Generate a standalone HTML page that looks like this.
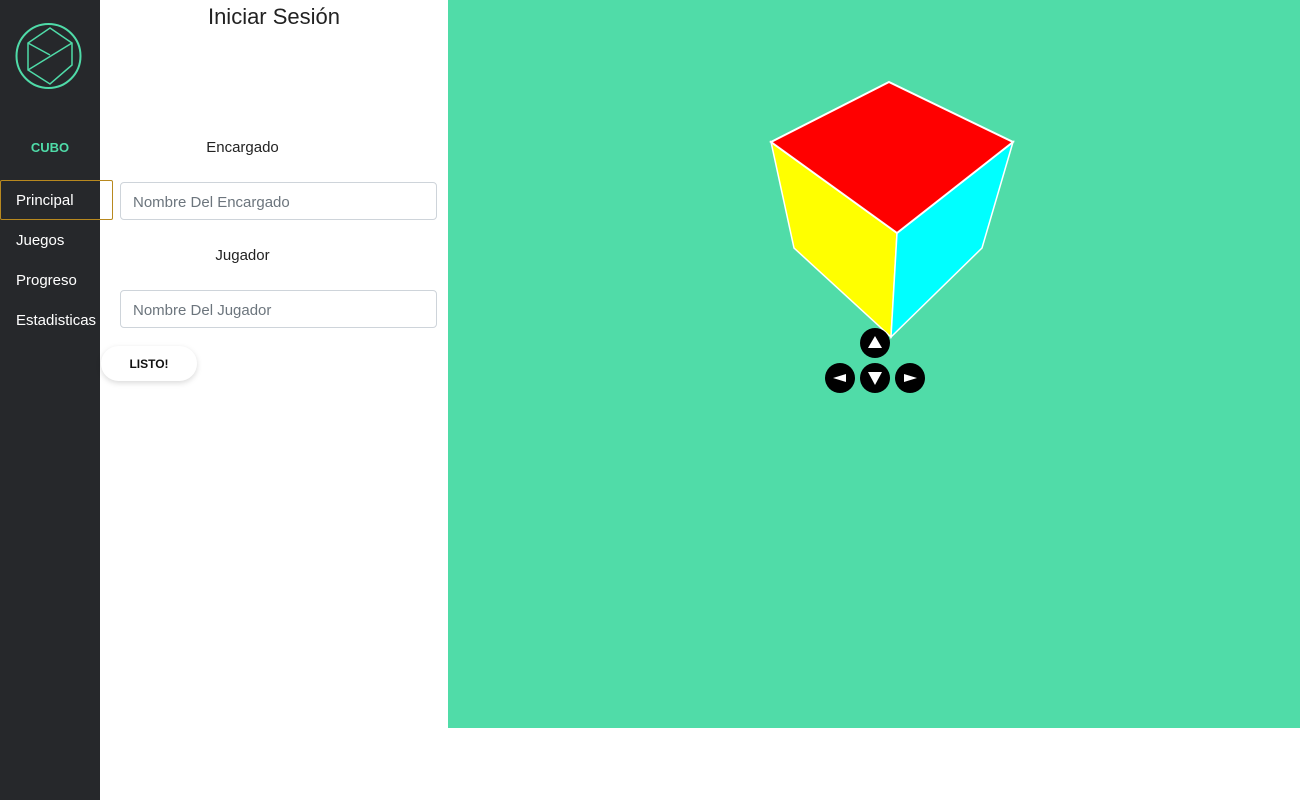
<!DOCTYPE html>
<html><head><meta charset="utf-8"><style>
*{box-sizing:border-box;margin:0;padding:0}
body{width:1300px;height:800px;background:#fff;font-family:"Liberation Sans",sans-serif;position:relative;overflow:hidden}
.side{position:absolute;left:0;top:0;width:100px;height:800px;background:#26282b}
.cubo{position:absolute;left:0;width:100px;top:140px;text-align:center;color:#4fdba8;font-weight:bold;font-size:13px}
.nav{position:absolute;left:16px;color:#fff;font-size:15px;white-space:nowrap}
.active{position:absolute;left:0;top:180px;width:113px;height:40px;border:1px solid #b8891f;border-radius:2px}
h1{position:absolute;left:100px;width:348px;top:4px;text-align:center;font-weight:normal;font-size:22px;color:#222}
.lab{position:absolute;left:100px;width:285px;text-align:center;font-size:15px;color:#222}
.inp{position:absolute;left:120px;width:317px;height:38px;border:1px solid #ced4da;border-radius:4px;padding:0 12px;line-height:40px;color:#6c757d;font-size:15px}
.btn{position:absolute;left:101px;top:346px;width:96px;height:35px;border-radius:18px;background:#fff;box-shadow:0 2px 6px rgba(0,0,0,.15);text-align:center;line-height:36px;font-weight:bold;font-size:12px;color:#111}
.green{position:absolute;left:448px;top:0;width:852px;height:728px;background:#50dca8}
</style></head><body>
<div class="side">
<svg width="100" height="110" style="position:absolute;left:0;top:0">
<circle cx="48.5" cy="56" r="32" fill="none" stroke="#4fdba8" stroke-width="2"/>
<polygon points="50,28 72,43 72,65 50,84 28,70 28,43" fill="none" stroke="#4fdba8" stroke-width="1.5"/>
<line x1="28" y1="43" x2="50" y2="55" stroke="#4fdba8" stroke-width="1.5"/>
<line x1="72" y1="43" x2="28" y2="70" stroke="#4fdba8" stroke-width="1.5"/>
</svg>
<div class="cubo">CUBO</div>
<div class="nav" style="top:192px">Principal</div>
<div class="nav" style="top:232px">Juegos</div>
<div class="nav" style="top:272px">Progreso</div>
<div class="nav" style="top:312px">Estadisticas</div>
</div>
<div class="active"></div>
<h1>Iniciar Sesión</h1>
<div class="lab" style="top:139px">Encargado</div>
<div class="inp" style="top:182px">Nombre Del Encargado</div>
<div class="lab" style="top:247px">Jugador</div>
<div class="inp" style="top:290px">Nombre Del Jugador</div>
<div class="btn">LISTO!</div>
<div class="green"></div>
<svg width="1300" height="800" style="position:absolute;left:0;top:0">
<polygon points="771,142 897,233 891,337 794,248" fill="#ff0" stroke="#fff" stroke-width="1.5"/>
<polygon points="1013,142 897,233 891,337 982,248" fill="#0ff" stroke="#fff" stroke-width="1.5"/>
<polygon points="889,82 1013,142 897,233 771,142" fill="#f00" stroke="#fff" stroke-width="2"/>
<circle cx="875" cy="343" r="15" fill="#000"/>
<circle cx="840" cy="378" r="15" fill="#000"/>
<circle cx="875" cy="378" r="15" fill="#000"/>
<circle cx="910" cy="378" r="15" fill="#000"/>
<polygon points="875,336 882,348 868,348" fill="#fff"/>
<polygon points="875,385 882,372 868,372" fill="#fff"/>
<polygon points="833,378 846,374 846,382" fill="#fff"/>
<polygon points="917,378 904,374 904,382" fill="#fff"/>
</svg>
</body></html>
